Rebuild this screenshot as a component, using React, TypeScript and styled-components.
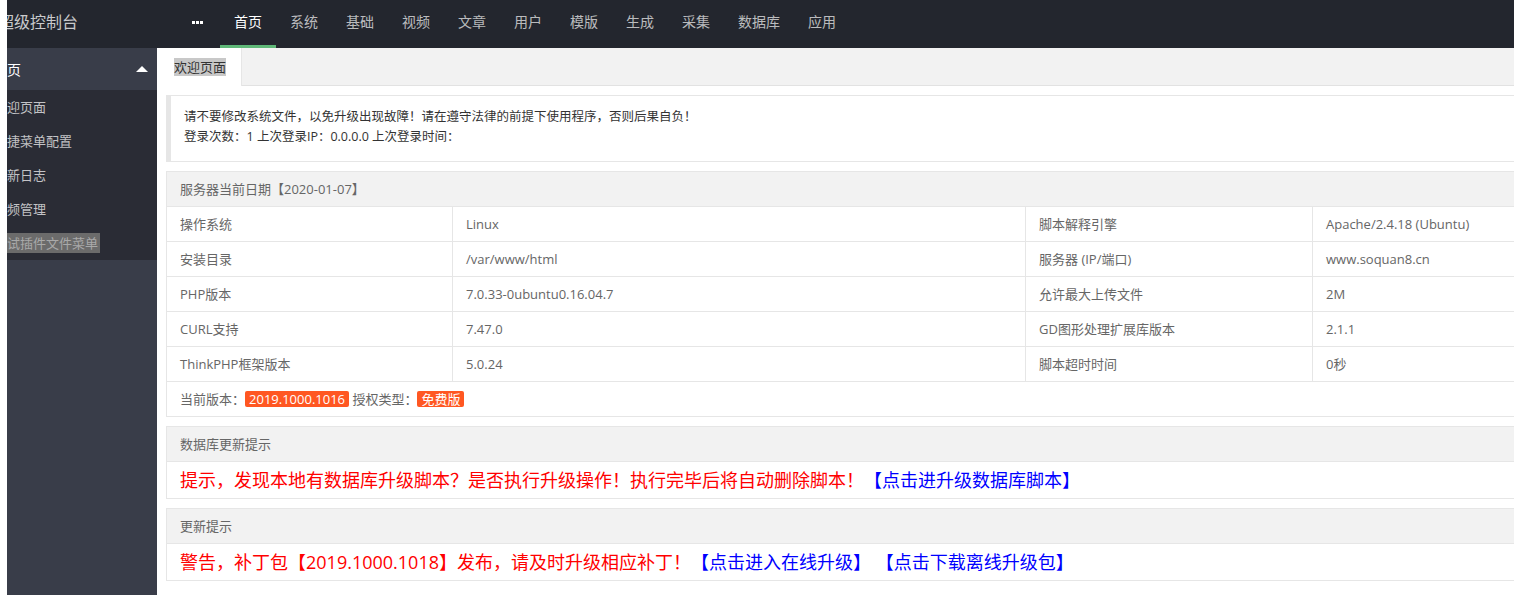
import styled, { createGlobalStyle, css } from "styled-components";

const GlobalStyle = createGlobalStyle`
  html, body {
    margin: 0;
    padding: 0;
    background: #fff;
    overflow: hidden;
  }
  body {
    font-family: "Open Sans", "Noto Sans CJK SC", sans-serif;
  }
  * { box-sizing: border-box; }
`;

const Page = styled.div`
  display: flex;
  flex-direction: column;
  height: 100vh;
  padding-left: 7px;
  overflow: hidden;
`;

const Header = styled.header`
  display: flex;
  flex-shrink: 0;
  height: 48px;
  background: #23262e;
`;

const Logo = styled.div`
  width: 150px;
  overflow: hidden;
  white-space: nowrap;
  line-height: 44px;
  font-size: 16px;
  color: #c9cacc;
  span { margin-left: -9px; }
`;

const Nav = styled.nav`
  display: flex;
`;

const NavItem = styled.a<{ $active?: boolean }>`
  position: relative;
  height: 48px;
  padding: 0 14px;
  line-height: 44px;
  font-size: 14px;
  white-space: nowrap;
  color: ${(p) => (p.$active ? "#fff" : "rgba(255,255,255,.7)")};
  ${(p) =>
    p.$active &&
    css`
      &::after {
        content: "";
        position: absolute;
        left: 0;
        right: 0;
        bottom: 0;
        height: 3px;
        background: #5fb878;
      }
    `}
`;

const MoreItem = styled.a`
  display: flex;
  align-items: center;
  height: 44px;
  padding: 0 17px 0 35px;
`;

const Body = styled.div`
  display: flex;
  flex: 1;
  min-height: 0;
`;

const Side = styled.aside`
  width: 150px;
  flex-shrink: 0;
  background: #393d49;
  overflow: hidden;
  white-space: nowrap;
`;

const SideParent = styled.div`
  display: flex;
  align-items: center;
  justify-content: space-between;
  height: 42px;
  padding-right: 9px;
  font-size: 14px;
  color: #fff;
  span { margin-left: -14px; }
`;

const Arrow = styled.i`
  width: 0;
  height: 0;
  border-left: 6px solid transparent;
  border-right: 6px solid transparent;
  border-bottom: 6px solid #fff;
`;

const SideChildren = styled.div`
  background: #2a2c35;
`;

const SideChild = styled.div<{ $selected?: boolean }>`
  height: 34px;
  line-height: 34px;
  font-size: 13px;
  color: rgba(255, 255, 255, 0.72);
  span {
    margin-left: -13px;
    padding: 1px 0;
    ${(p) =>
      p.$selected &&
      css`
        background: #6b6b6b;
        color: #a9a9a9;
        padding-right: 2px;
      `}
  }
`;

const Main = styled.main`
  flex: 1;
  min-width: 0;
  overflow: hidden;
`;

const TabBar = styled.div`
  display: flex;
  height: 38px;
  background: #f2f2f2;
  border-bottom: 1px solid #e2e2e2;
`;

const Tab = styled.div`
  height: 38px;
  padding: 0 15px 0 17px;
  line-height: 38px;
  font-size: 13px;
  color: #333;
  background: #fff;
  border-right: 1px solid #e6e6e6;
  span { background: #c8c8c8; }
`;

const Content = styled.div`
  display: flex;
  flex-direction: column;
  gap: 9px;
  width: 1729px;
  padding: 9px 0 0 9px;
`;

const Quote = styled.div`
  padding: 11px 13px 14px;
  border: 1px solid #e6e6e6;
  border-left-width: 5px;
  line-height: 20px;
  font-size: 12.5px;
  color: #333;
`;

const Card = styled.section`
  border: 1px solid #e6e6e6;
`;

const CardHeader = styled.div`
  height: 35px;
  padding: 0 13px;
  line-height: 34px;
  font-size: 13px;
  color: #666;
  background: #f2f2f2;
  border-bottom: 1px solid #e6e6e6;
`;

const InfoGrid = styled.div`
  display: grid;
  grid-template-columns: 285px 573px 287px 1fr;
`;

const Cell = styled.div<{ $first?: boolean }>`
  height: 35px;
  padding: 0 13px;
  line-height: 34px;
  font-size: 13px;
  color: #666;
  border-bottom: 1px solid #e6e6e6;
  border-left: ${(p) => (p.$first ? "none" : "1px solid #e6e6e6")};
  white-space: nowrap;
`;

const VersionRow = styled.div`
  height: 34px;
  padding: 0 13px;
  line-height: 34px;
  font-size: 13px;
  color: #666;
`;

const Badge = styled.span`
  display: inline-block;
  padding: 0 4px;
  line-height: 16px;
  color: #fff;
  background: #ff5722;
  border-radius: 2px;
`;

const NoticeBody = styled.div`
  height: 36px;
  padding: 0 13px;
  line-height: 36px;
  font-size: 18px;
  color: #f00;
  white-space: nowrap;
`;

const Link = styled.a`
  color: #00f;
  cursor: pointer;
`;

const navs = ["系统", "基础", "视频", "文章", "用户", "模版", "生成", "采集", "数据库", "应用"];

const sideItems = ["欢迎页面", "快捷菜单配置", "更新日志", "视频管理", "测试插件文件菜单"];

const info = [
  ["操作系统", "Linux", "脚本解释引擎", "Apache/2.4.18 (Ubuntu)"],
  ["安装目录", "/var/www/html", "服务器 (IP/端口)", "www.soquan8.cn"],
  ["PHP版本", "7.0.33-0ubuntu0.16.04.7", "允许最大上传文件", "2M"],
  ["CURL支持", "7.47.0", "GD图形处理扩展库版本", "2.1.1"],
  ["ThinkPHP框架版本", "5.0.24", "脚本超时时间", "0秒"],
];

function MoreIcon() {
  return (
    <svg width="11" height="3" viewBox="0 0 11 3">
      <rect x="0" y="0" width="3" height="3" fill="#fff" />
      <rect x="4" y="0" width="3" height="3" fill="#fff" />
      <rect x="8" y="0" width="3" height="3" fill="#fff" />
    </svg>
  );
}

export default function App() {
  return (
    <Page>
      <GlobalStyle />
      <Header>
        <Logo>
          <span>超级控制台</span>
        </Logo>
        <Nav>
          <MoreItem>
            <MoreIcon />
          </MoreItem>
          <NavItem $active>首页</NavItem>
          {navs.map((n) => (
            <NavItem key={n}>{n}</NavItem>
          ))}
        </Nav>
      </Header>
      <Body>
        <Side>
          <SideParent>
            <span>首页</span>
            <Arrow />
          </SideParent>
          <SideChildren>
            {sideItems.map((s, i) => (
              <SideChild key={s} $selected={i === sideItems.length - 1}>
                <span>{s}</span>
              </SideChild>
            ))}
          </SideChildren>
        </Side>
        <Main>
          <TabBar>
            <Tab>
              <span>欢迎页面</span>
            </Tab>
          </TabBar>
          <Content>
            <Quote>
              请不要修改系统文件，以免升级出现故障！请在遵守法律的前提下使用程序，否则后果自负！
              <br />
              登录次数：1 上次登录IP：0.0.0.0 上次登录时间：
            </Quote>
            <Card>
              <CardHeader>服务器当前日期【2020-01-07】</CardHeader>
              <InfoGrid>
                {info.map((row) =>
                  row.map((c, i) => (
                    <Cell key={row[0] + i} $first={i === 0}>
                      {c}
                    </Cell>
                  ))
                )}
              </InfoGrid>
              <VersionRow>
                当前版本：<Badge>2019.1000.1016</Badge> 授权类型：<Badge>免费版</Badge>
              </VersionRow>
            </Card>
            <Card>
              <CardHeader>数据库更新提示</CardHeader>
              <NoticeBody>
                提示，发现本地有数据库升级脚本？是否执行升级操作！执行完毕后将自动删除脚本！
                <Link>【点击进升级数据库脚本】</Link>
              </NoticeBody>
            </Card>
            <Card>
              <CardHeader>更新提示</CardHeader>
              <NoticeBody>
                警告，补丁包【2019.1000.1018】发布，请及时升级相应补丁！<Link>【点击进入在线升级】</Link>{" "}
                <Link>【点击下载离线升级包】</Link>
              </NoticeBody>
            </Card>
          </Content>
        </Main>
      </Body>
    </Page>
  );
}
